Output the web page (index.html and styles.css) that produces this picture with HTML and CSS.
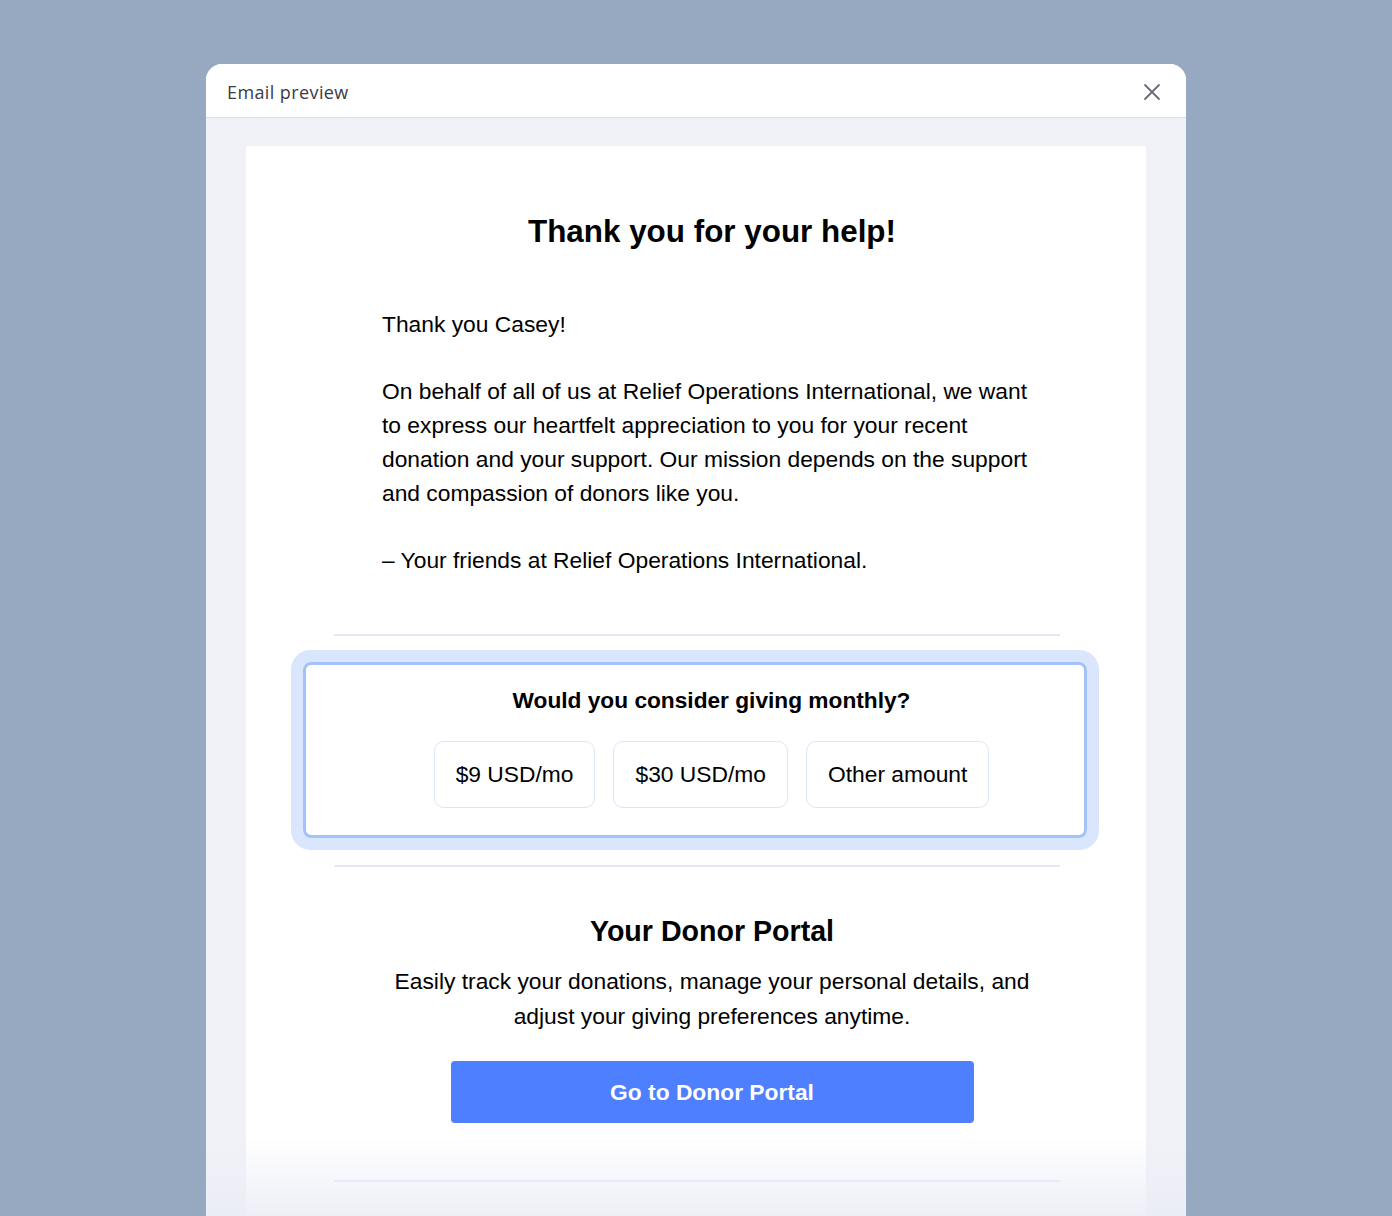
FILE: index.html
```html
<!DOCTYPE html>
<html lang="en">

<head>
    <meta charset="UTF-8">
    <meta name="viewport" content="width=device-width, initial-scale=1.0">
    <title>Email preview</title>
    <link rel="stylesheet" href="styles.css">
</head>

<body>
    <div class="modal">
        <div class="modal-header">
            <span class="modal-title">Email preview</span>
            <button class="close-btn" aria-label="Close">
                <svg width="20" height="20" viewBox="0 0 20 20">
                    <path d="M3 3 L17 17 M17 3 L3 17" stroke="#6b6b78" stroke-width="1.8" stroke-linecap="round" fill="none" />
                </svg>
            </button>
        </div>

        <div class="modal-body">
            <div class="email">
                <h1 class="email-title">Thank you for your help!</h1>

                <div class="email-text">
                    <p>Thank you Casey!</p>
                    <p>On behalf of all of us at Relief Operations International, we want to express our heartfelt appreciation to you for your recent donation and your support. Our mission depends on the support and compassion of donors like you.</p>
                    <p>– Your friends at Relief Operations International.</p>
                </div>

                <hr class="divider">

                <div class="monthly">
                    <h3>Would you consider giving monthly?</h3>
                    <div class="amounts">
                        <a class="amount">$9 USD/mo</a>
                        <a class="amount">$30 USD/mo</a>
                        <a class="amount">Other amount</a>
                    </div>
                </div>

                <hr class="divider second">

                <div class="portal">
                    <h2>Your Donor Portal</h2>
                    <p>Easily track your donations, manage your personal details, and adjust your giving preferences anytime.</p>
                    <a class="portal-btn">Go to Donor Portal</a>
                </div>

                <hr class="divider last">
            </div>
            <!-- затухание внизу превью -->
            <div class="fade"></div>
        </div>
    </div>
</body>

</html>
```
FILE: styles.css
```css
body {
    margin: 0;
    background-color: #97a8c1;
    height: 1216px;
    overflow: hidden;
    font-family: "Liberation Sans", Arial, sans-serif;
}

.modal {
    width: 980px;
    margin: 64px 0 0 206px;
    background-color: #f1f2f8;
    border-radius: 16px 16px 0 0;
    overflow: hidden;
}

.modal-header {
    height: 53px;
    display: flex;
    align-items: center;
    justify-content: space-between;
    padding: 0 24px 0 21px;
    background-color: white;
    border-bottom: 1px solid #dcdde4;
}

.modal-title {
    font-family: "Open Sans", sans-serif;
    font-size: 18px;
    color: #3b3b47;
    letter-spacing: 0.4px;
    padding-top: 2px;
}

.close-btn {
    border: none;
    background: none;
    padding: 0;
    width: 20px;
    height: 20px;
    margin-top: 2px;
    cursor: pointer;
}

.modal-body {
    position: relative;
    padding: 28px 40px 0 40px;
    height: 1100px;
}

.email {
    background-color: white;
    padding: 68px 86px 0 88px;
    height: 1100px;
    color: #000;
}

.email-title {
    margin: 0 0 57px 0;
    padding-left: 30px;
    font-size: 31.4px;
    line-height: 36px;
    text-align: center;
    font-weight: bold;
}

.email-text {
    width: 650px;
    padding-left: 48px;
    font-size: 22.8px;
    line-height: 34px;
}

.email-text p {
    margin: 0 0 33px 0;
}

.email-text p:last-child {
    margin-bottom: 0;
}

.divider {
    border: none;
    border-top: 2px solid #e3e8f6;
    margin: 57px 0 26px 0;
}

.divider.second {
    margin: 27px 0 47px 0;
}

.divider.last {
    margin: 57px 0 0 0;
}

.monthly {
    margin: 0 -27px 0 -31px;
    border: 3px solid #a3c2f8;
    border-radius: 8px;
    box-shadow: 0 0 0 12px #d9e6fd;
    padding: 22px 0 27px 33px;
    text-align: center;
}

.monthly h3 {
    margin: 0 0 28px 0;
    font-size: 22.7px;
    line-height: 26px;
}

.amounts {
    display: flex;
    justify-content: center;
    gap: 18px;
}

.amount {
    display: flex;
    align-items: center;
    height: 65px;
    padding: 0 21px;
    border: 1px solid #dbe5fb;
    border-radius: 10px;
    font-size: 22.8px;
}

.portal {
    padding-left: 30px;
    text-align: center;
}

.portal h2 {
    margin: 0 0 16px 0;
    font-size: 28.6px;
    line-height: 34px;
}

.portal p {
    width: 650px;
    margin: 0 auto 27px auto;
    font-size: 22.8px;
    line-height: 35px;
}

.portal-btn {
    display: block;
    width: 523px;
    height: 62px;
    line-height: 62px;
    margin: 0 auto;
    background-color: #4d7fff;
    color: white;
    border-radius: 4px;
    font-size: 22.8px;
    font-weight: bold;
}

.fade {
    position: absolute;
    left: 0;
    right: 0;
    top: 1018px;
    height: 82px;
    background: linear-gradient(rgba(234, 236, 246, 0), rgba(234, 236, 246, 0.85));
}
```
